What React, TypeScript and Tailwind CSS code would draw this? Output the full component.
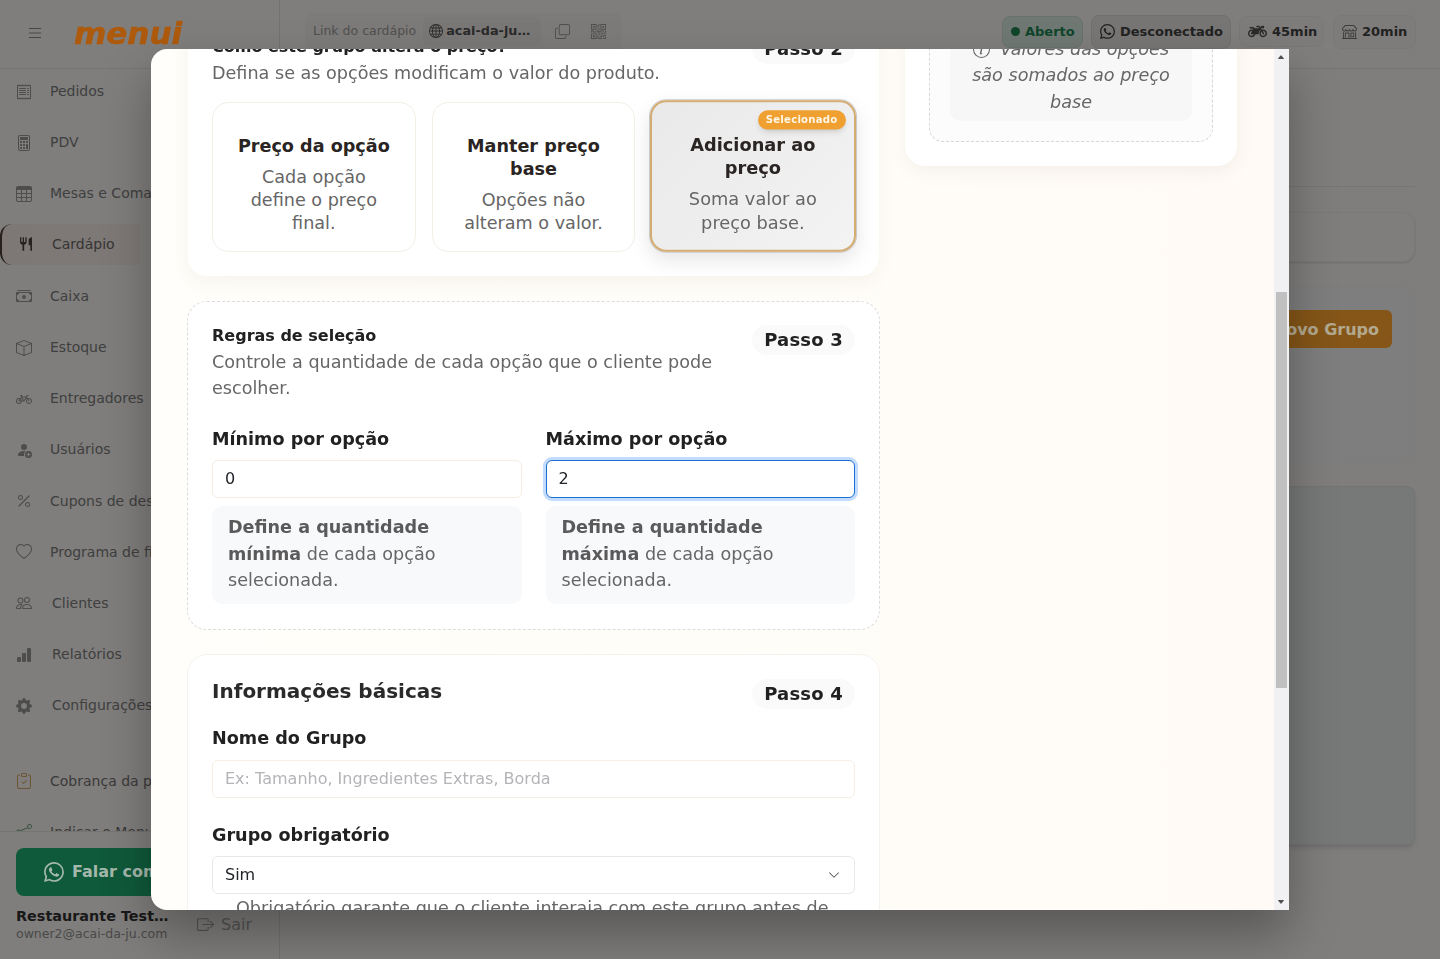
import React, { useEffect, useRef } from 'react';
import {
  BsList, BsReceipt, BsCalculator, BsTable, BsCashStack, BsBox, BsBicycle, BsPersonFillAdd, BsPercent, BsHeart,
  BsPeople, BsBarChartFill, BsGearFill, BsClipboardCheck, BsShare, BsWhatsapp, BsBoxArrowRight, BsGlobe,
  BsCopy, BsQrCode, BsShop, BsInfoCircle, BsChevronDown, BsCaretUpFill, BsCaretDownFill,
} from 'react-icons/bs';
import { MdRestaurant } from 'react-icons/md';
import { FaMotorcycle } from 'react-icons/fa';

const navTop = [
  { label: 'Pedidos', icon: BsReceipt, left: 'w-[34px]' },
  { label: 'PDV', icon: BsCalculator, left: 'w-[34px]' },
  { label: 'Mesas e Comandas', icon: BsTable, left: 'w-[34px]' },
  { label: 'Cardápio', icon: MdRestaurant, left: 'w-[36px]', active: true },
  { label: 'Caixa', icon: BsCashStack, left: 'w-[34px]' },
  { label: 'Estoque', icon: BsBox, left: 'w-[34px]' },
  { label: 'Entregadores', icon: BsBicycle, left: 'w-[34px]' },
  { label: 'Usuários', icon: BsPersonFillAdd, left: 'w-[34px]' },
  { label: 'Cupons de desconto', icon: BsPercent, left: 'w-[34px]' },
  { label: 'Programa de fidelidade', icon: BsHeart, left: 'w-[34px]' },
  { label: 'Clientes', icon: BsPeople, left: 'w-[36px]' },
  { label: 'Relatórios', icon: BsBarChartFill, left: 'w-[36px]' },
  { label: 'Configurações', icon: BsGearFill, left: 'w-[36px]' },
];

function Sidebar() {
  return (
    <aside className="flex h-[959px] w-[280px] shrink-0 flex-col border-r border-[#e8e4de] bg-[#fffcf8]">
      <div className="flex h-[69px] shrink-0 items-center border-b border-[#ece8e2] pb-[3px] pl-[26px]">
        <BsList size={18} className="text-[#8f8f8f]" />
        <span className="relative z-20 mt-[2px] ml-[30px] text-[31px] leading-none font-bold italic text-[#ae5a0c] [-webkit-text-stroke:0.6px_#ae5a0c]">menui</span>
      </div>
      <nav className="-mt-[3px] flex-1 overflow-hidden">
        {navTop.map(item => (
          <div
            key={item.label}
            className={`relative flex h-[51.2px] items-center pl-[16px] text-[14px] ${item.active ? 'text-[#6f6a68]' : 'text-[#808080]'}`}
          >
            {item.active && (
              <span className="absolute top-[4px] left-0 h-[41px] w-[140px] rounded-l-[12px] border-l-[2px] border-[#50403a] bg-[linear-gradient(90deg,#fbf1ec,#fcf3ee)]" />
            )}
            <span className={`relative flex shrink-0 items-center ${item.left} ${item.active ? '-top-[1px] pl-[2px]' : ''}`}>
              <item.icon size={16} className={item.active ? 'text-[#4a4442]' : 'text-[#9a9a9a]'} />
            </span>
            <span className={`relative whitespace-nowrap ${item.active ? '-top-[1px]' : ''}`}>{item.label}</span>
          </div>
        ))}
        <div className="mt-[24px] flex h-[51.2px] items-center pl-[16px] text-[14px] text-[#757575]">
          <span className="flex w-[34px] shrink-0"><BsClipboardCheck size={16} className="text-[#d9a868]" /></span>
          <span className="whitespace-nowrap">Cobrança da plataforma</span>
        </div>
        <div className="flex h-[51.2px] items-center pl-[16px] text-[14px] text-[#757575]">
          <span className="flex w-[34px] shrink-0"><BsShare size={16} className="text-[#7fae92]" /></span>
          <span className="whitespace-nowrap">Indicar o Menui</span>
        </div>
      </nav>
      <div className="h-[128px] shrink-0 border-t border-[#ece8e2] px-[16px] pt-[16px]">
        <div className="relative z-20 flex h-[48px] w-[247px] items-center justify-center gap-[8px] rounded-[8px] bg-[#0f5a3a] text-[16px] font-bold text-[#a5b8ac]">
          <BsWhatsapp size={20} />
          Falar com suporte
        </div>
        <div className="mt-[11px] flex items-center justify-between">
          <div className="w-[160px]">
            <div className="truncate text-[14.4px] leading-[18px] font-bold text-[#333333]">Restaurante Teste Ltda</div>
            <div className="text-[12.5px] leading-[17px] text-[#949494]">owner2@acai-da-ju.com</div>
          </div>
          <div className="mr-[11px] flex items-center gap-[7px] text-[16px] text-[#aaaaaa]">
            <BsBoxArrowRight size={17} />
            Sair
          </div>
        </div>
      </div>
    </aside>
  );
}

function HeaderPill({ children, className }: { children: React.ReactNode; className: string }) {
  return <div className={`flex items-center rounded-[8px] border text-[13px] font-bold ${className}`}>{children}</div>;
}

function MainBehind() {
  return (
    <main className="min-w-0 flex-1">
      <header className="flex h-[69px] items-center justify-between border-b border-[#ece8e2] pr-[24px] pb-[5px] pl-[25px]">
        <div className="-mt-[1px] flex h-[37px] items-center rounded-[8px] bg-[#fbf7f2] pl-[8px]">
          <span className="text-[12.5px] text-[#a0a0a0]">Link do cardápio</span>
          <div className="ml-[7px] flex h-[29px] w-[118px] items-center gap-[3px] rounded-[6px] bg-[#f4f1ee] pl-[6px] text-[12.8px] font-bold text-[#555555]">
            <BsGlobe size={14} />
            <span>acai-da-ju…</span>
          </div>
          <BsCopy size={15} className="ml-[14px] text-[#a0a0a0]" />
          <BsQrCode size={15} className="mr-[16px] ml-[21px] text-[#a0a0a0]" />
        </div>
        <div className="flex items-center">
          <HeaderPill className="h-[32px] w-[81px] border-[#cfe6d8] bg-[#dff1e6] pl-[8px] text-[#1f8a55]">
            <span className="mr-[5px] h-[9px] w-[9px] rounded-full bg-[#1f8a55]" />
            Aberto
          </HeaderPill>
          <HeaderPill className="ml-[8px] h-[34px] w-[140px] border-[#e4e1dc] bg-[#efedea] pl-[8px] text-[#444444]">
            <BsWhatsapp size={15} className="mr-[5px]" />
            Desconectado
          </HeaderPill>
          <HeaderPill className="ml-[8px] h-[31px] w-[85px] border-[#f5f1ec] bg-[#fdf9f5] pl-[8px] text-[#444444]">
            <FaMotorcycle size={19} className="mr-[5px] text-[#555555]" />
            45min
          </HeaderPill>
          <HeaderPill className="ml-[9px] h-[34px] w-[83px] border-[#f5f1ec] bg-[#fdf9f5] pl-[8px] text-[#444444]">
            <BsShop size={15} className="mr-[5px] text-[#777777]" />
            20min
          </HeaderPill>
        </div>
      </header>
      <div className="px-[25px]">
        <div className="h-[118px] border-b border-[#eceae6]" />
        <div className="mt-[25px] h-[50px] rounded-[12px] border border-[#f5f3f0] bg-[#fffdfb] shadow-sm" />
        <div className="mt-[25px] flex h-[175px] items-start justify-end rounded-[12px] border border-[#faf8f5] bg-[#fffdfc] pt-[22px] pr-[22px]">
          <div className="relative z-20 flex h-[38px] items-center rounded-[6px] bg-[#855618] px-[13px] pt-[1px] text-[16px] font-bold text-[#b3a98f]">+ Novo Grupo</div>
        </div>
        <div className="mt-[24px] h-[359px] rounded-[8px] border border-[#e6e9e8] bg-[#eff3f1] shadow-md" />
      </div>
    </main>
  );
}

function StepBadge({ n }: { n: number }) {
  return (
    <span className="block shrink-0 rounded-full bg-[#fafafa] px-[12px] py-[2px] text-[18px] leading-[26px] font-bold tracking-[0.2px] whitespace-nowrap text-[#212121]">
      Passo {n}
    </span>
  );
}

function PriceOption({ title, text, selected }: { title: string; text: string; selected?: boolean }) {
  return (
    <div
      className={`relative flex h-[150px] flex-col items-center justify-center rounded-[16px] px-[24px] pt-[16px] text-center ${
        selected
          ? '-translate-y-[1px] scale-[1.01] border-2 border-[#d4ab70] bg-[linear-gradient(135deg,#e9e9e9,#f3f3f4)] shadow-[0_0_0_1px_#c9c9c9,0_8px_20px_rgba(0,0,0,0.1)]'
          : 'border border-[#f3eee6] bg-white'
      }`}
    >
      {selected && (
        <span className="absolute top-[8px] right-[8px] rounded-full bg-[#f0a030] px-[8px] py-[3px] text-[10px] leading-[13px] font-bold tracking-[0.25px] text-[#fff6e6] shadow-md">
          Selecionado
        </span>
      )}
      <div className="text-[17.6px] leading-[23px] font-bold text-[#2a2422]">{title}</div>
      <div className="mt-[8px] text-[17.6px] leading-[23px] text-[#666666]">{text}</div>
    </div>
  );
}

function QtyField({ label, value, strong, focused }: { label: string; value: string; strong: string; focused?: boolean }) {
  return (
    <div>
      <label className="mt-[1px] block text-[17.6px] leading-[26px] font-bold text-[#212121]">{label}</label>
      <input
        readOnly
        value={value}
        className={`mt-[8px] block h-[38px] w-full rounded-[6px] border bg-white px-[12px] pb-[1px] text-[16px] text-[#212529] outline-none ${
          focused ? 'border-[#1a6fd0] shadow-[0_0_0_3px_rgba(13,110,253,0.25)]' : 'border-[#f3eee0]'
        }`}
      />
      <div className="mt-[8px] rounded-[10px] bg-[#f8f9fb] px-[16px] pt-[8px] pb-[10.5px] text-[17.6px] leading-[26.5px] text-[#666666]">
        <strong className="font-bold text-[#5a5a5a]">Define a quantidade {strong}</strong> de cada opção selecionada.
      </div>
    </div>
  );
}

function GroupModal() {
  const scroller = useRef<HTMLDivElement>(null);

  useEffect(() => {
    if (scroller.current) scroller.current.scrollTop = 496;
  }, []);

  return (
    <div className="fixed top-[49px] left-[151px] z-30 flex h-[861px] w-[1138px] overflow-hidden rounded-l-[16px] bg-[linear-gradient(90deg,#fffefa,#fffdf8_60%,#fffaf6)] shadow-[0_25px_50px_rgba(0,0,0,0.3)]">
      <div ref={scroller} className="min-w-0 flex-1 overflow-hidden">
        {/* the top of the form is scrolled away in the picture */}
        <div className="flex h-[1807px] items-start gap-[25px] pl-[36px]">
          <div className="w-[693px] shrink-0 pt-[456px]">
            <section className="rounded-[20px] border border-transparent bg-white bg-clip-padding p-[24px] shadow-[0_6px_18px_rgba(120,90,50,0.06)]">
              <div className="flex items-start justify-between">
                <div>
                  <h3 className="text-[16px] leading-[26px] font-bold text-[#212121]">Como este grupo altera o preço?</h3>
                  <p className="text-[17.6px] leading-[26px] text-[#666666]">Defina se as opções modificam o valor do produto.</p>
                </div>
                <StepBadge n={2} />
              </div>
              <div className="mt-[16px] grid grid-cols-3 gap-[16px]">
                <PriceOption title="Preço da opção" text="Cada opção define o preço final." />
                <PriceOption title="Manter preço base" text="Opções não alteram o valor." />
                <PriceOption title="Adicionar ao preço" text="Soma valor ao preço base." selected />
              </div>
            </section>

            <section className="mt-[24px] h-[329px] rounded-[20px] border border-dashed border-[#dcdcdc] bg-white p-[24px]">
              <div className="flex items-start justify-between gap-[24px]">
                <div>
                  <h3 className="text-[16px] leading-[20px] font-bold text-[#212121]">Regras de seleção</h3>
                  <p className="mt-[3px] text-[17.6px] leading-[26px] text-[#666666]">Controle a quantidade de cada opção que o cliente pode escolher.</p>
                </div>
                <span className="-mt-[1px]"><StepBadge n={3} /></span>
              </div>
              <div className="mt-[24px] grid grid-cols-2 gap-[24px]">
                <QtyField label="Mínimo por opção" value="0" strong="mínima" />
                <QtyField label="Máximo por opção" value="2" strong="máxima" focused />
              </div>
            </section>

            <section className="mt-[24px] rounded-[20px] border border-[#f6f3ee] bg-white p-[24px]">
              <div className="flex items-start justify-between">
                <h2 className="-mt-[1px] text-[20px] leading-[26px] font-bold text-[#2a2a2a]">Informações básicas</h2>
                <StepBadge n={4} />
              </div>
              <label className="mt-[16px] block text-[17.6px] leading-[26px] font-bold text-[#212121]">Nome do Grupo</label>
              <input
                readOnly
                placeholder="Ex: Tamanho, Ingredientes Extras, Borda"
                className="mt-[9px] block h-[38px] w-full rounded-[6px] border border-[#f6eee2] bg-white px-[12px] pb-[1px] text-[16px] outline-none placeholder:text-[#b4b4b8]"
              />
              <label className="mt-[24px] block text-[17.6px] leading-[26px] font-bold text-[#212121]">Grupo obrigatório</label>
              <div className="relative mt-[8px]">
                <select className="block h-[38px] w-full appearance-none rounded-[6px] border border-[#e8e8ea] bg-white px-[12px] text-[16px] text-[#212529] outline-none">
                  <option>Sim</option>
                </select>
                <BsChevronDown size={12} className="absolute top-[13px] right-[15px] text-[#343a40]" />
              </div>
              <p className="mt-[1px] px-[24px] text-left text-[17.6px] leading-[26px] text-[#666666]">
                Obrigatório garante que o cliente interaja com este grupo antes de continuar.
              </p>
            </section>
          </div>

          <aside className="w-[332px] shrink-0 pt-[340px]">
            <div className="rounded-[20px] bg-white px-[24px] pb-[24px] shadow-[0_6px_18px_rgba(120,90,50,0.07)]">
              <div className="flex h-[249px] flex-col justify-end rounded-[14px] border border-dashed border-[#d8d8d8] bg-[#fdfcfc] px-[20px] pb-[20px]">
                <div className="rounded-[10px] bg-[#f8f7f8] px-[21px] pt-[8px] pb-[6px] text-center text-[17.6px] leading-[26.5px] text-[#666666] italic">
                  <BsInfoCircle size={17} className="mr-[10px] inline-block" />
                  Valores das opções são somados ao preço base
                </div>
              </div>
            </div>
          </aside>
        </div>
      </div>
      {/* scrollbar rail */}
      <div className="relative w-[15px] shrink-0 bg-[#f1f0f2]">
        <BsCaretUpFill size={8} className="absolute top-[4px] left-[3px] text-[#505050]" />
        <div className="absolute top-[243px] left-[2px] h-[396px] w-[11px] bg-[#c1c0c1]" />
        <BsCaretDownFill size={8} className="absolute bottom-[4px] left-[3px] text-[#505050]" />
      </div>
    </div>
  );
}

export default function App() {
  return (
    <div className="relative flex h-[959px] w-[1440px] overflow-hidden bg-[#fffdf9] font-['DejaVu_Sans',sans-serif]">
      <Sidebar />
      <MainBehind />
      <div className="fixed inset-0 z-10 bg-black/50" />
      <GroupModal />
    </div>
  );
}
